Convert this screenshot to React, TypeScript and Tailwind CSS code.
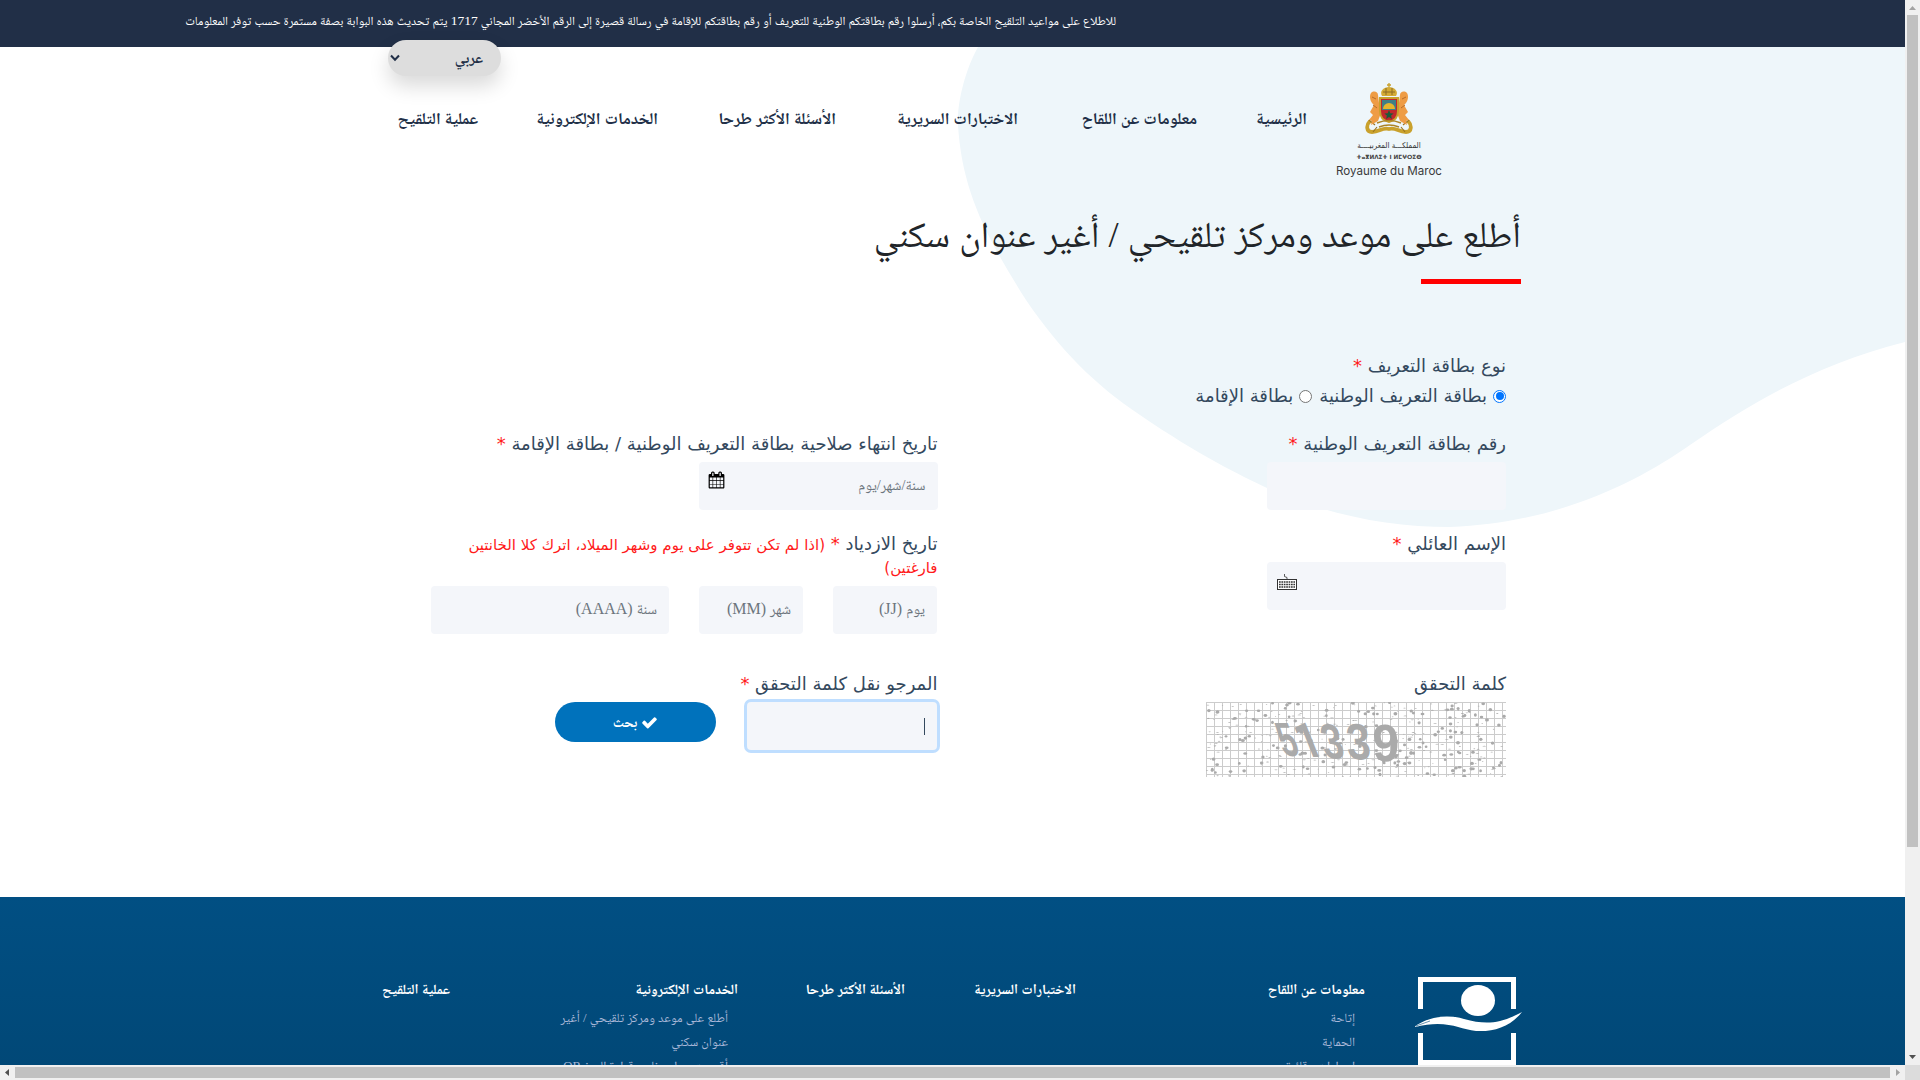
import React from "react";

const navItems = [
  { text: "الرئيسية", cls: "w-[50px]" },
  { text: "معلومات عن اللقاح", cls: "w-[119px]" },
  { text: "الاختبارات السريرية", cls: "w-[122px]" },
  { text: "الأسئلة الأكثر طرحا", cls: "w-[118px]" },
  { text: "الخدمات الإلكترونية", cls: "w-[120px]" },
  { text: "عملية التلقيح", cls: "w-[81px]" },
];

function Star() {
  return <span className="text-[#ff1a1a]">*</span>;
}

function CalendarIcon() {
  return (
    <svg className="mt-[9px]" width="17" height="18" viewBox="0 0 1792 1792" fill="#000">
      <path d="M192 1664h288v-288h-288v288zm352 0h320v-288h-320v288zm-352-352h288v-320h-288v320zm352 0h320v-320h-320v320zm-352-384h288v-288h-288v288zm736 736h320v-288h-320v288zm-384-736h320v-288h-320v288zm768 736h288v-288h-288v288zm-384-352h320v-320h-320v320zm-352-864v-288q0-13-9.500-22.500t-22.500-9.500h-64q-13 0-22.500 9.500t-9.500 22.500v288q0 13 9.500 22.500t22.500 9.500h64q13 0 22.500-9.500t9.500-22.500zm736 864h288v-320h-288v320zm-384-384h320v-288h-320v288zm384 0h288v-288h-288v288zm32-480v-288q0-13-9.500-22.500t-22.500-9.500h-64q-13 0-22.500 9.500t-9.500 22.500v288q0 13 9.500 22.500t22.500 9.500h64q13 0 22.500-9.500t9.500-22.500zm384-64v1280q0 52-38 90t-90 38h-1408q-52 0-90-38t-38-90v-1280q0-52 38-90t90-38h128v-96q0-66 47-113t113-47h64q66 0 113 47t47 113v96h384v-96q0-66 47-113t113-47h64q66 0 113 47t47 113v96h128q52 0 90 38t38 90z" />
    </svg>
  );
}

function CheckIcon() {
  return (
    <svg width="17" height="17" viewBox="0 0 1792 1792" fill="#fff">
      <path d="M1671 566q0 40-28 68l-724 724-136 136q-28 28-68 28t-68-28l-136-136-362-362q-28-28-28-68t28-68l136-136q28-28 68-28t68 28l294 295 656-657q28-28 68-28t68 28l136 136q28 28 28 68z" />
    </svg>
  );
}

function Emblem() {
  return (
    <div className="mt-[36px] flex w-[108px] shrink-0 flex-col items-center">
      <svg width="48" height="52" viewBox="0 0 48 52">
        <path d="M5 38C1 42 1 49 7 49C15 49 17 44 24 46C31 44 33 49 41 49C47 49 47 42 43 38" fill="none" stroke="#c9a12c" strokeWidth="3.800" />
        <path d="M4 37l6 5M44 37l-6 5M8 49l4-5M40 49l-4-5" stroke="#9a7420" strokeWidth="1.200" />
        <path d="M6 10c3-3 7-1 7 2l1 8 2 10-3 8-7 4 1-4-3-1 4-5-3-3 4-7c-4-3-5-9-3-12z" fill="#ee9c45" />
        <path d="M42 10c-3-3-7-1-7 2l-1 8-2 10 3 8 7 4-1-4 3-1-4-5 3-3-4-7c4-3 5-9 3-12z" fill="#ee9c45" />
        <path d="M7 14l4 2M8 22l4 3M41 14l-4 2M40 22l-4 3" stroke="#b86c28" strokeWidth="1" />
        <path d="M15 15h18v13q0 9-9 11q-9-2-9-11z" fill="#c1272d" stroke="#c9a12c" strokeWidth="2" />
        <path d="M17 17h14v10H17z" fill="#3f7f86" />
        <path d="M18 26a6 6 0 0 1 12 0z" fill="#e6b52c" />
        <path d="m24 27 1.300 3.200 3.400.2-2.600 2.200.8 3.300-2.900-1.800-2.900 1.800.8-3.300-2.600-2.200 3.400-.2z" fill="#1d5b3a" />
        <path d="M24 0v4M22 2h4" stroke="#c9a12c" strokeWidth="1.300" />
        <path d="M17 13c-3-5 2-9 7-9s10 4 7 9z" fill="#d4ab35" />
        <path d="M18 9h12M21 5v7M27 5v7" stroke="#8d6c24" strokeWidth="1" />
        <path d="M12 40q12-5 24 0M14 44q10-4 20 0" fill="none" stroke="#ab8427" strokeWidth="1.500" />
      </svg>
      <div className="mt-[4px] h-[13px] whitespace-nowrap font-['DejaVu_Sans_Condensed','DejaVu_Sans'] text-[8px] leading-[13px] text-[#333]">المملكـــة المغربيــــة</div>
      <div className="h-[10px] whitespace-nowrap font-['DejaVu_Sans'] text-[5.700px] font-bold leading-[10px] text-[#444]" dir="ltr">ⵜⴰⴳⵍⴷⵉⵜ ⵏ ⵍⵎⵖⵔⵉⴱ</div>
      <div className="mt-[1px] whitespace-nowrap font-['Inter'] text-[11.600px] leading-[16px] text-[#3a3a3a]" dir="ltr">Royaume du Maroc</div>
    </div>
  );
}

function Captcha() {
  const dots: React.ReactNode[] = [];
  let seed = 7;
  const rnd = () => {
    seed = (seed * 16807) % 2147483647;
    return seed / 2147483647;
  };
  for (let i = 0; i < 380; i++) {
    const big = rnd() > 0.6;
    dots.push(<ellipse key={i} cx={rnd() * 300} cy={rnd() * 75} rx={big ? 1.3 + rnd() * 0.7 : 0.6 + rnd() * 1.4} ry={big ? 1.2 + rnd() * 0.5 : 0.4} fill="#aaa" />);
  }
  const lines: React.ReactNode[] = [];
  for (let x = 0.5; x < 300; x += 8) lines.push(<path key={"v" + x} d={`M${x} 0V75`} />);
  for (let y = 0.5; y < 75; y += 8) lines.push(<path key={"h" + y} d={`M0 ${y}H300`} />);
  return (
    <svg width="300" height="75" viewBox="0 0 300 75" direction="ltr">
      <rect width="300" height="75" fill="#fff" />
      <g stroke="#ccc">{lines}</g>
      {dots}
      <g fill="#aaa" fontFamily="Liberation Sans" fontWeight="700" fontSize="48">
        <text transform="matrix(.66 0 .36 1 78 54)">5</text>
        <text transform="matrix(.85 0 .4 1 97 55)" fontFamily="Roboto">1</text>
        <text transform="matrix(.8 .04 .22 1.03 119 56)">3</text>
        <text transform="matrix(.9 .03 .1 1.06 142 57)">3</text>
        <text transform="matrix(1 .02 .03 1.1 167 59)">9</text>
      </g>
    </svg>
  );
}

function FooterMark() {
  return (
    <svg width="108" height="88" viewBox="0 0 108 88">
      <path d="M6.500 32V2.500H99.500V32M6.500 56V85.500H99.500V56" fill="none" stroke="#fff" strokeWidth="5" />
      <ellipse cx="64" cy="23.500" rx="17" ry="15.500" fill="#fff" />
      <path d="M0 50C14 40 32 37 50 42C72 48 86 47 108 35C96 50 80 55 62 54C44 52 34 42 0 50z" fill="#fff" />
      <path d="M1 47l15-6M2 49l14-5" stroke="#014b7c" strokeWidth=".6" />
    </svg>
  );
}

function FooterCol({ title, items, cls }: { title: string; items?: string[]; cls: string }) {
  return (
    <div className={"shrink-0 " + cls}>
      <h4 className="whitespace-nowrap text-[14px] font-bold leading-[24px] text-white">{title}</h4>
      <div className="mt-[4px] pr-[10px]">
        {items?.map((t) => (
          <p key={t} className="whitespace-nowrap text-[12.800px] leading-[24px] text-[#a9b8d8]">{t}</p>
        ))}
      </div>
    </div>
  );
}

function VScroll() {
  return (
    <div className="flex h-[1065px] w-[15px] shrink-0 flex-col items-center bg-[#f0f0f0]">
      <svg width="15" height="15"><path d="M4 10h7L7.500 6z" fill="#a3a3a3" /></svg>
      <div className="h-[832px] w-[11px] bg-[#c1c1c1]" />
      <svg className="mt-auto" width="15" height="15"><path d="M4 5h7L7.500 9z" fill="#505050" /></svg>
    </div>
  );
}

export default function App() {
  const label = "whitespace-nowrap font-['DejaVu_Sans'] text-[18px] leading-[26px] text-[#34495e]";
  const input = "flex h-[48px] shrink-0 rounded-[4px] bg-[#f4f6fa] px-[12px] leading-[46px] text-[16px] text-[#6c757d]";
  return (
    <div className="h-[1080px] w-[1920px] overflow-hidden bg-white font-['Liberation_Serif','Noto_Naskh_Arabic','DejaVu_Sans_Condensed',serif] text-[#212f47]" dir="ltr">
      <div className="flex">
        <div className="relative h-[1065px] w-[1905px] overflow-hidden bg-white" dir="rtl">
          <svg className="absolute left-0 top-0" width="1905" height="560">
            <path d="M978 47C960 80 957 115 958 125C962 190 985 235 1026 300C1060 350 1095 385 1140 415C1200 456 1240 475 1267 488C1330 516 1390 527 1450 527C1560 523 1640 480 1690 445C1760 397 1820 364 1905 342V47z" fill="#eef6fa" />
          </svg>
          <div className="relative">
            <div className="flex h-[47px] bg-[#212f47] pr-[789px] pt-[10px]">
              <p className="whitespace-nowrap text-[12.350px] leading-[22px] text-white">للاطلاع على مواعيد التلقيح الخاصة بكم، أرسلوا رقم بطاقتكم الوطنية للتعريف أو رقم بطاقتكم للإقامة في رسالة قصيرة إلى الرقم الأخضر المجاني <span className="text-[13.500px]">1717</span> يتم تحديث هذه البوابة بصفة مستمرة حسب توفر المعلومات</p>
              <div className="absolute left-[388px] top-[40px] flex h-[36px] w-[113px] items-center justify-between rounded-[18px] bg-[#ddd] pl-[2px] pr-[18px] text-[15px] font-bold shadow-[0_10px_20px_rgba(0,0,0,0.15)]">
                <span>عربي</span>
                <svg width="10" height="8" viewBox="0 0 10 8"><path d="M1 1.500 5 5.800 9 1.500" fill="none" stroke="#212f47" strokeWidth="2" /></svg>
              </div>
            </div>

            <header className="flex h-[162px] pr-[462px]">
              <Emblem />
              <nav className="mr-[28px] mt-[59px] flex gap-[60px]">
                {navItems.map((n) => (
                  <a key={n.text} className={"whitespace-nowrap text-[16.600px] font-bold leading-[26px] " + n.cls}>{n.text}</a>
                ))}
              </nav>
            </header>

            <main className="h-[688px] pr-[384px]">
              <h1 className="h-[70px] whitespace-nowrap text-[36.450px] leading-[53px] text-[#212529]">أطلع على موعد ومركز تلقيحي / أغير عنوان سكني</h1>
              <div className="h-[5px] w-[100px] bg-[#f00]" />

              <div className="grid grid-cols-[568.500px_510px] pr-[15px] pt-[69px]">
                <div className="h-[78px]">
                  <div className={label}>نوع بطاقة التعريف <Star /></div>
                  <div className={"mt-[4px] flex items-center " + label}>
                    <span className="flex size-[13px] items-center justify-center rounded-full border border-[#0075ff] bg-white"><span className="size-[8px] rounded-full bg-[#0075ff]" /></span>
                    <span className="mr-[6px]">بطاقة التعريف الوطنية</span>
                    <span className="mr-[7px] size-[13px] rounded-full border border-[#767676] bg-white" />
                    <span className="mr-[6px]">بطاقة الإقامة</span>
                  </div>
                </div>
                <div />

                <div className="h-[100px]">
                  <div className={label}>رقم بطاقة التعريف الوطنية <Star /></div>
                  <div className={input + " mt-[5px] w-[239px]"} />
                </div>
                <div className="h-[100px]">
                  <div className={label}>تاريخ انتهاء صلاحية بطاقة التعريف الوطنية / بطاقة الإقامة <Star /></div>
                  <div className={input + " mt-[5px] w-[239px] justify-between pl-[9px]"}>
                    <span className="text-[14.300px]">سنة/شهر/يوم</span>
                    <CalendarIcon />
                  </div>
                </div>

                <div className="h-[140px]">
                  <div className={label}>الإسم العائلي <Star /></div>
                  <div className={input + " mt-[5px] w-[239px] justify-end pl-[10px]"}>
                    <svg className="mt-[12px]" width="20" height="16" viewBox="0 0 20 16">
                      <path d="M7.500 0V2.500L10 3.500V5.500" fill="none" stroke="#333" strokeWidth=".8" />
                      <rect x=".5" y="5.500" width="19" height="10" fill="#fff" stroke="#333" />
                      <path d="M2 8h16M2 10.500h16M2 13h16" stroke="#333" strokeWidth="1.500" strokeDasharray="1.700 .7" />
                    </svg>
                  </div>
                </div>
                <div className="h-[140px]">
                  <div className={label}>تاريخ الازدياد <Star /> <span className="text-[15px] text-[#ff1a1a]">(اذا لم تكن تتوفر على يوم وشهر الميلاد، اترك كلا الخانتين</span></div>
                  <div className="h-[22px] font-['DejaVu_Sans'] text-[15px] leading-[20px] text-[#ff1a1a]">فارغتين)</div>
                  <div className="mr-[0.500px] mt-[6px] flex gap-[30px]">
                    <div className={input + " w-[104px]"}><span><span className="text-[14.500px]">يوم</span> (JJ)</span></div>
                    <div className={input + " w-[104px]"}><span><span className="text-[14.500px]">شهر</span> (MM)</span></div>
                    <div className={input + " w-[238px]"}><span><span className="text-[14.500px]">سنة</span> (AAAA)</span></div>
                  </div>
                </div>

                <div>
                  <div className={label}>كلمة التحقق</div>
                  <div className="mt-[5px]"><Captcha /></div>
                </div>
                <div>
                  <div className={label}>المرجو نقل كلمة التحقق <Star /></div>
                  <div className="mr-[0.500px] mt-[5px] flex gap-[31px]">
                    <div className="flex h-[48px] w-[190px] items-center rounded-[4px] bg-[#f4f6fa] pr-[12px] shadow-[0_0_0_3px_#bfdeff]"><span className="h-[17px] w-px bg-[#34495e]" /></div>
                    <div className="flex h-[40px] w-[161px] items-center justify-center gap-[4px] rounded-[20px] bg-[#0072bc] text-[14px] font-bold text-white">
                      <CheckIcon />
                      <span>بحث</span>
                    </div>
                  </div>
                </div>
              </div>
            </main>

            <footer className="flex h-[168px] bg-gradient-to-b from-[#014f83] to-[#014877] pr-[383px] pt-[80px]">
              <FooterMark />
              <div className="mr-[49px] mt-[1px] flex">
                <FooterCol cls="w-[289px]" title="معلومات عن اللقاح" items={["إتاحة", "الحماية", "إجراءات وقائية"]} />
                <FooterCol cls="w-[171px]" title="الاختبارات السريرية" />
                <FooterCol cls="w-[167px]" title="الأسئلة الأكثر طرحا" />
                <FooterCol cls="w-[288px]" title="الخدمات الإلكترونية" items={["أطلع على موعد ومركز تلقيحي / أغير", "عنوان سكني", "أقوم بتحميل برنامج قراءة الرمز QR"]} />
                <FooterCol cls="w-[80px]" title="عملية التلقيح" />
              </div>
            </footer>
          </div>
        </div>
        <VScroll />
      </div>
      <div className="flex h-[15px] items-center bg-[#f0f0f0]">
        <svg width="15" height="15"><path d="M9 4v7L5 7.500z" fill="#505050" /></svg>
        <div className="h-[11px] w-[1875px] bg-[#c1c1c1]" />
        <svg width="15" height="15"><path d="M6 4v7l4-3.500z" fill="#a3a3a3" /></svg>
        <div className="h-[15px] w-[15px] bg-[#dcdcdc]" />
      </div>
    </div>
  );
}
